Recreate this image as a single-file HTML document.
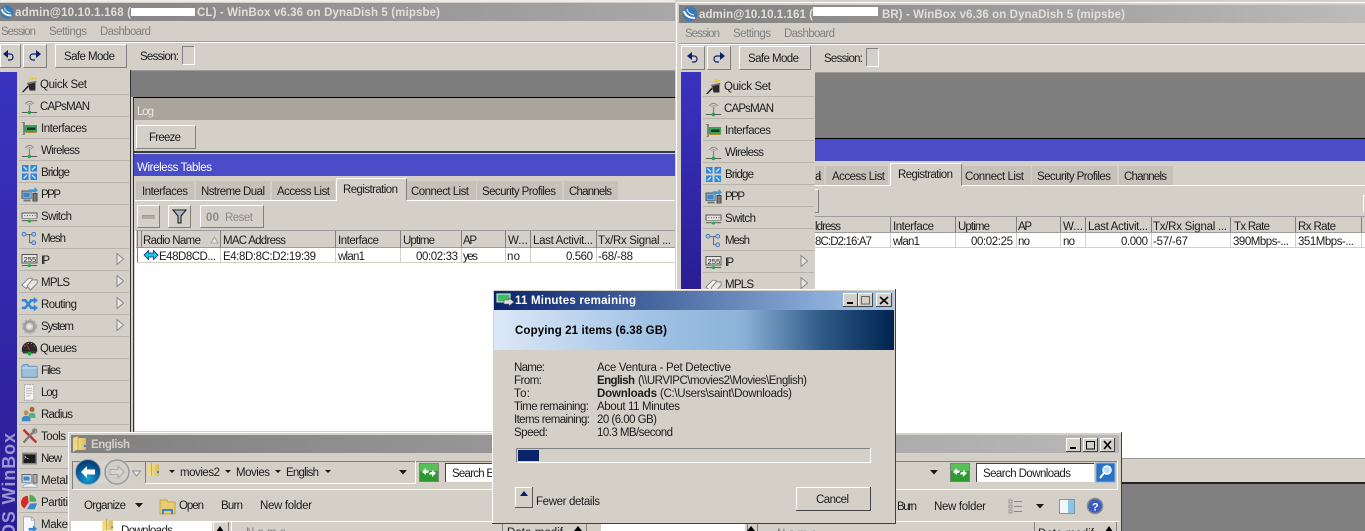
<!DOCTYPE html>
<html><head><meta charset="utf-8"><title>WinBox</title>
<style>
html,body{margin:0;padding:0;background:#fff;width:1365px;height:531px;overflow:hidden}
svg{display:block;font-family:"Liberation Sans",Arial,sans-serif;font-size:11.5px}
text{fill:#1c1c1c}
.g{fill:#808080}.t{fill:#e2dfd8;font-weight:bold}.k{fill:#fff}.c{fill:#d4d0c8;font-weight:bold}.dis{fill:#8a8a8a}
.w,.d,.l,.s,.x{fill:none;shape-rendering:crispEdges}
.w{stroke:#fff}.d{stroke:#808080}.l{stroke:#b8b4ac}.s{stroke:#9c9c9c}.x{stroke:#000}
rect{shape-rendering:crispEdges}
.tab{fill:#c6c2ba}
.ar{fill:#1a1a1a}
.uh{fill:#0b1f6a}.uc{fill:none;stroke:#0b1f6a;stroke-width:1.200}
</style></head><body>
<svg xmlns="http://www.w3.org/2000/svg" width="1365" height="531" viewBox="0 0 1365 531">
<defs>
<linearGradient id="tg1" x1="0" x2="1" y1="0" y2="0"><stop offset="0" stop-color="#808080"/><stop offset="1" stop-color="#a8a8a8"/></linearGradient>
<linearGradient id="tg2" x1="0" x2="1" y1="0" y2="0"><stop offset="0" stop-color="#808080"/><stop offset="1" stop-color="#bcbcbc"/></linearGradient>
<linearGradient id="tg3" x1="0" x2="1" y1="0" y2="0"><stop offset="0" stop-color="#808080"/><stop offset="1" stop-color="#b8b8b8"/></linearGradient>
<linearGradient id="sb" x1="0" x2="0" y1="0" y2="1"><stop offset="0" stop-color="#3a33c0"/><stop offset="1" stop-color="#2a1c94"/></linearGradient>
<linearGradient id="dt" x1="0" x2="1" y1="0" y2="0"><stop offset="0" stop-color="#0a246a"/><stop offset="1" stop-color="#a6caf0"/></linearGradient>
<linearGradient id="dg" x1="0" x2="1" y1="0" y2="0"><stop offset="0" stop-color="#dce8f6"/><stop offset=".42" stop-color="#9dc0e4"/><stop offset=".62" stop-color="#8cb2d8"/><stop offset=".82" stop-color="#2f5a86"/><stop offset="1" stop-color="#002350"/></linearGradient>
<radialGradient id="bk" cx=".5" cy=".75" r=".7"><stop offset="0" stop-color="#10a8d8"/><stop offset=".6" stop-color="#0a5c9c"/><stop offset="1" stop-color="#0a3a68"/></radialGradient>
<linearGradient id="fo" x1="0" x2="1" y1="0" y2="0"><stop offset="0" stop-color="#f6e6a0"/><stop offset="1" stop-color="#d8b850"/></linearGradient>

<symbol id="i-qs" viewBox="0 0 20 20"><path d="M1 19L8 11L9 13L3 19Z" fill="#222"/><path d="M8 8L17 7V17H10Z" fill="#2a2a2a"/><path d="M7 9L18 6.5" stroke="#777" stroke-width="2"/><path d="M9 4l1 1M13 1v4M15 3h3" stroke="#e0c020" stroke-width="1.4"/><circle cx="11" cy="3" r="1.2" fill="#f0e040"/></symbol>
<symbol id="i-wl" viewBox="0 0 20 20"><path d="M5 7Q10 1 15 7" fill="none" stroke="#888" stroke-width="1.1"/><path d="M7 8Q10 5 13 8" fill="none" stroke="#999" stroke-width="1"/><path d="M10 8V16" stroke="#888" stroke-width="1.5"/><path d="M1 17H19" stroke="#444" stroke-width="1"/><circle cx="10" cy="17" r="2" fill="#10b040"/></symbol>
<symbol id="i-if" viewBox="0 0 20 20"><path d="M1 3H4V17H2M3 3V16" fill="none" stroke="#777"/><rect x="4" y="6" width="15" height="8" fill="#3f9f5f"/><rect x="7" y="9" width="10" height="3" fill="#1a3a20"/><rect x="5" y="14" width="13" height="1.500" fill="#b09030"/></symbol>
<symbol id="i-br" viewBox="0 0 20 20"><g fill="#2f86d8"><rect x="1" y="1" width="8" height="8"/><rect x="11" y="1" width="8" height="8"/><rect x="1" y="11" width="8" height="8"/><rect x="11" y="11" width="8" height="8"/></g><path d="M3 3L7 7M17 3L13 7M3 17L7 13M17 17L13 13" stroke="#dcecfa" stroke-width="1.6"/></symbol>
<symbol id="i-pp" viewBox="0 0 20 20"><rect x="1" y="6" width="11" height="9" fill="#8aa8c8" stroke="#555"/><rect x="3" y="8" width="7" height="5" fill="#3a88cc"/><rect x="3" y="16" width="8" height="2" fill="#777"/><rect x="14" y="9" width="5" height="9" fill="#777" stroke="#444"/><path d="M9 4H16V1L20 5L16 9V7H9Z" fill="#3a9ae0"/></symbol>
<symbol id="i-sw" viewBox="0 0 20 20"><rect x="1" y="6" width="18" height="6" fill="#e4e2dc" stroke="#555"/><path d="M4 9h1M7 9h1M10 9h1M13 9h1M16 9h1" stroke="#222"/><path d="M1 15H19" stroke="#444"/><circle cx="10" cy="15.500" r="1.800" fill="#10b040"/></symbol>
<symbol id="i-me" viewBox="0 0 20 20"><circle cx="3.500" cy="5" r="2.300" fill="#a8c8f0" stroke="#3a6ac0"/><circle cx="15" cy="5" r="2.300" fill="#a8c8f0" stroke="#3a6ac0"/><circle cx="15" cy="15" r="2.300" fill="#a8c8f0" stroke="#3a6ac0"/><path d="M6 5.500H10V15H13M10 5.500H13" fill="none" stroke="#555"/></symbol>
<symbol id="i-ip" viewBox="0 0 20 20"><rect x="1" y="3" width="18" height="10" fill="#e8e6e0" stroke="#555"/><text x="3" y="12" style="font-size:9px">255</text><path d="M1 16H19" stroke="#444"/><circle cx="10" cy="16" r="1.800" fill="#10b040"/></symbol>
<symbol id="i-ml" viewBox="0 0 20 20"><path d="M1 13L9 5H13V9L6 17Z" fill="#f4f4f0" stroke="#777"/><path d="M7 14L13 7H19V11L11 19Z" fill="#e8e8e2" stroke="#777"/></symbol>
<symbol id="i-ro" viewBox="0 0 20 20"><path d="M1 5H5L12 14H16M1 14H5L12 5H16" fill="none" stroke="#2f86d8" stroke-width="3"/><path d="M15 1L20 5L15 9ZM15 10L20 14L15 18Z" fill="#2f86d8"/></symbol>
<symbol id="i-sy" viewBox="0 0 20 20"><circle cx="10" cy="10" r="6" fill="none" stroke="#a0a0a0" stroke-width="3.400"/><circle cx="10" cy="10" r="8.200" fill="none" stroke="#b0b0b0" stroke-width="2" stroke-dasharray="3 2.400"/><circle cx="10" cy="10" r="2.400" fill="#e8e8e8"/></symbol>
<symbol id="i-qu" viewBox="0 0 20 20"><path d="M1 11A9 9 0 0 1 19 11V14H1Z" fill="#2a2a2a"/><path d="M10 12L6 4" stroke="#e02020" stroke-width="1.200"/><path d="M4 7h1M8 4h1M12 4h1M15 7h1" stroke="#ddd"/><path d="M2 15H18" stroke="#333" stroke-width="1.600"/><circle cx="10" cy="16" r="2.200" fill="#10b040"/></symbol>
<symbol id="i-fi" viewBox="0 0 20 20"><path d="M1 5L3 3H8L9 5H18L19 6V18H1Z" fill="#9cc0dc" stroke="#5c86a8"/><path d="M1 7H19" stroke="#cfe2f0"/></symbol>
<symbol id="i-lo" viewBox="0 0 20 20"><path d="M4 1H15V19H4Z" fill="#f6f6f0" stroke="#999" stroke-dasharray="2 1"/><path d="M6 5h7M6 8h7M6 11h7M6 14h5" stroke="#a8a8a8"/></symbol>
<symbol id="i-ra" viewBox="0 0 20 20"><circle cx="13" cy="4" r="3" fill="#b06a30"/><path d="M9 14V10Q13 6 17 10V14Z" fill="#50b080"/><circle cx="6" cy="8" r="2.800" fill="#c08a50"/><path d="M1 18V14Q6 9 11 14V18Z" fill="#3a88cc"/></symbol>
<symbol id="i-to" viewBox="0 0 20 20"><path d="M3 2L18 17" stroke="#d03030" stroke-width="3"/><path d="M17 2L3 17" stroke="#777" stroke-width="2.600"/><circle cx="16" cy="3.500" r="2.600" fill="none" stroke="#888" stroke-width="1.500"/></symbol>
<symbol id="i-te" viewBox="0 0 20 20"><rect x="1" y="3" width="18" height="14" fill="#888"/><rect x="3" y="5" width="14" height="10" fill="#1c1c1c"/><path d="M4 7l2 1.500-2 1.500M7 10h2" stroke="#ddd" fill="none" stroke-width=".8"/></symbol>
<symbol id="i-me2" viewBox="0 0 20 20"><rect x="1" y="3" width="11" height="9" fill="#cfd8e0" stroke="#666"/><rect x="3" y="5" width="7" height="5" fill="#3a88cc"/><rect x="14" y="3" width="5" height="10" fill="#aaa" stroke="#666"/><path d="M2 18Q4 13 9 14Q13 12 16 15Q20 15 19 18Z" fill="#e8f0f8" stroke="#98a8c0"/></symbol>
<symbol id="i-pa" viewBox="0 0 20 20"><path d="M8 2A8 8 0 0 0 4 17L9 10Z" fill="#d82828"/><path d="M10 1A8 8 0 0 1 18 9H10Z" fill="#50a850"/><path d="M11 11H19L16 18H7Z" fill="#3a88cc"/></symbol>
<symbol id="i-ma" viewBox="0 0 20 20"><path d="M3 1H12L16 5V19H3Z" fill="#f6f8fa" stroke="#98a4b0"/><path d="M12 1V5H16" fill="none" stroke="#98a4b0"/><path d="M9 14H14V11L19 15L14 19V17H9Z" fill="#2f86d8"/></symbol>
<symbol id="folder" viewBox="0 0 14 16"><path d="M0 2L5 0V13L0 16Z" fill="#f0d880"/><path d="M5 2H13V14H3Z" fill="url(#fo)"/><path d="M5 0V14" stroke="#b89838" stroke-width=".8"/><rect x="11" y="9" width="2" height="2" fill="#3a88cc"/></symbol>
<symbol id="logo" viewBox="0 0 16 16"><circle cx="8" cy="8" r="7.500" fill="#3a7ab8"/><path d="M2 5Q4 12 13 12" fill="none" stroke="#fff" stroke-width="2"/><path d="M5 3Q6 8 12 9" fill="none" stroke="#cfe2f4" stroke-width="1.200"/></symbol>
<symbol id="refresh" viewBox="0 0 20 19"><rect x=".5" y=".5" width="19" height="18" fill="#2c9a2c" stroke="#808080"/><rect x="1" y="1" width="18" height="7" fill="#58c058"/><path d="M3 9L7 5V7.500H10L9 10H7V12ZM17 10L13 14V11.500H10L11 9H13V7Z" fill="#fff"/></symbol>
<symbol id="tri" viewBox="0 0 20 20"><path d="M7 4.500L13.500 10L7 15.500Z" fill="#e8e6e0" stroke="#8a8a8a"/></symbol>
</defs>

<!-- background -->
<rect width="1365" height="531" fill="#d4d0c8"/>
<rect width="1365" height="2" fill="#fff" opacity=".6"/>

<!-- LEFT WINDOW -->
<rect x="0" y="3" width="675" height="18" fill="url(#tg1)"/>
<use href="#logo" x="0" y="4" width="14" height="16"/>
<text class="t" x="15" y="16" textLength="116">admin@10.10.1.168 (</text>
<rect x="131" y="8" width="64" height="8" fill="#fff"/>
<text class="t" x="197" y="16" textLength="243">CL) - WinBox v6.36 on DynaDish 5 (mipsbe)</text>
<text class="g" x="1" y="35" textLength="35">Session</text>
<text class="g" x="49" y="35" textLength="38">Settings</text>
<text class="g" x="100" y="35" textLength="51">Dashboard</text>
<path class="s" d="M0 41.500H675"/><path class="w" d="M0 42.500H675"/>
<path class="w" d="M0.500 67V44.500H20.500"/><path class="d" d="M20.500 44.500V67.500H0"/>
<path class="uh" d="M3 54L8 50V58Z"/><path class="uc" d="M7 54H10C14 54 14 60 10 60H8"/>
<path class="w" d="M23.500 67V44.500H46.500"/><path class="d" d="M46.500 44.500V67.500H23.500"/>
<path class="uh" d="M41 54L36 50V58Z"/><path class="uc" d="M37 54H33C29 54 29 60 33 60H35"/>
<path class="w" d="M55.500 67V44.500H126.500"/><path class="d" d="M126.500 44.500V67.500H55.500"/>
<text x="64" y="60" textLength="51">Safe Mode</text>
<text x="140" y="60" textLength="39">Session:</text>
<path class="d" d="M194.500 46.500H182.500V64.500"/><path class="w" d="M182.500 64.500H194.500V46.500"/>

<rect x="131" y="70" width="544" height="27" fill="#7d7d7d"/>
<path class="s" d="M131 70.500H675"/>
<rect x="131" y="97" width="544" height="1" fill="#000"/>
<rect x="133" y="98" width="542" height="22" fill="#a9a59d"/>
<text x="137" y="115" textLength="17" style="fill:#ece9e2">Log</text>
<path class="w" d="M136.500 148V125.500H195.500"/><path class="d" d="M195.500 125.500V148.500H136.500"/>
<text x="149" y="141" textLength="32">Freeze</text>
<rect x="133" y="151" width="542" height="2" fill="#3a3a3a"/>
<rect x="133" y="154" width="542" height="22" fill="#4b4dc8"/>
<text class="k" x="137" y="171" textLength="75">Wireless Tables</text>

<rect x="136" y="181" width="58" height="19" class="tab"/>
<rect x="196" y="181" width="74" height="19" class="tab"/>
<rect x="272" y="181" width="63" height="19" class="tab"/>
<rect x="407" y="181" width="69" height="19" class="tab"/>
<rect x="477" y="181" width="85" height="19" class="tab"/>
<rect x="564" y="181" width="54" height="19" class="tab"/>
<path class="w" d="M135 200.500H336.500V178.500H406"/><path class="d" d="M406.500 179V200"/><path class="w" d="M407 200.500H675"/>
<text x="142" y="195" textLength="46">Interfaces</text>
<text x="201" y="195" textLength="64">Nstreme Dual</text>
<text x="277" y="195" textLength="53">Access List</text>
<text x="343" y="193" textLength="55">Registration</text>
<text x="411" y="195" textLength="58">Connect List</text>
<text x="482" y="195" textLength="74">Security Profiles</text>
<text x="569" y="195" textLength="43">Channels</text>

<path class="w" d="M137.500 227V205.500H159.500"/><path class="d" d="M159.500 205.500V227.500H137.500"/>
<rect x="142" y="215" width="12" height="3" fill="#b0aca4" stroke="#888" stroke-width=".5"/>
<path class="w" d="M168.500 227V205.500H190.500"/><path class="d" d="M190.500 205.500V227.500H168.500"/>
<path d="M173 210H186L181 216V223L178 223V216Z" fill="#a8b4c0" stroke="#222" stroke-width="1.100"/>
<path class="w" d="M200.500 227V205.500H263.500"/><path class="d" d="M263.500 205.500V227.500H200.500"/>
<text class="dis" x="206" y="221" textLength="13" style="font-weight:bold">00</text>
<text class="dis" x="225" y="221" textLength="28">Reset</text>

<!-- left table -->
<rect x="135" y="231" width="540" height="200" fill="#fff"/>
<rect x="136" y="231" width="539" height="17" fill="#d4d0c8"/>
<path class="s" d="M136 230.500H675M136 247.500H675"/>
<path class="d" d="M137.500 231V262M141.500 231V248M220.500 231V248M335.500 231V248M400.500 231V248M461.500 231V248M505.500 231V248M530.500 231V248M596.500 231V248"/>
<path class="l" style="stroke:#d4d0c8" d="M137 262.500H675M220.500 248V262M335.500 248V262M400.500 248V262M461.500 248V262M505.500 248V262M530.500 248V262M596.500 248V262"/>
<text x="143" y="244" textLength="58">Radio Name</text>
<path d="M211 243L214.500 237L218 243Z" fill="#e8e6e0" stroke="#999" stroke-width=".8"/>
<text x="223" y="244" textLength="63">MAC Address</text>
<text x="338" y="244" textLength="41">Interface</text>
<text x="403" y="244" textLength="32">Uptime</text>
<text x="463" y="244" textLength="14">AP</text>
<text x="508" y="244" textLength="20">W...</text>
<text x="533" y="244" textLength="60">Last Activit...</text>
<text x="598" y="244" textLength="73">Tx/Rx Signal ...</text>
<path d="M144 255L148.500 250.500V253H153.500V250.500L158 255L153.500 259.500V257H148.500V259.500Z" fill="#18c8e0" stroke="#0a2a70" stroke-width=".8"/>
<text x="159" y="260" textLength="57">E48D8CD...</text>
<text x="223" y="260" textLength="93">E4:8D:8C:D2:19:39</text>
<text x="338" y="260" textLength="27">wlan1</text>
<text x="416" y="260" textLength="42">00:02:33</text>
<text x="463" y="260" textLength="15">yes</text>
<text x="507" y="260" textLength="13">no</text>
<text x="566" y="260" textLength="27">0.560</text>
<text x="598" y="260" textLength="35">-68/-88</text>

<!-- left sidebar -->
<rect x="0" y="72" width="17" height="459" fill="url(#sb)"/>
<rect x="17" y="70" width="113" height="461" fill="#d4d0c8"/>
<rect x="130" y="70" width="1" height="461" fill="#333"/>
<rect x="131" y="97" width="2" height="335" fill="#d4d0c8"/>
<rect x="133" y="98" width="1" height="334" fill="#333"/>
<path class="l" d="M19 94.500H129M19 116.500H129M19 138.500H129M19 160.500H129M19 182.500H129M19 204.500H129M19 226.500H129M19 248.500H129M19 270.500H129M19 292.500H129M19 314.500H129M19 336.500H129M19 358.500H129M19 380.500H129M19 402.500H129M19 424.500H129M19 446.500H129M19 468.500H129M19 490.500H129M19 512.500H129"/>
<text transform="translate(15 538) rotate(-90)" x="0" y="0" textLength="105" style="fill:#9a97d2;font-size:18px;font-weight:bold">OS WinBox</text>
<use href="#i-qs" x="21" y="76" width="17" height="17"/><text x="40" y="88" textLength="47">Quick Set</text>
<use href="#i-wl" x="21" y="98" width="17" height="17"/><text x="40" y="110" textLength="50">CAPsMAN</text>
<use href="#i-if" x="21" y="120" width="17" height="17"/><text x="41" y="132" textLength="46">Interfaces</text>
<use href="#i-wl" x="21" y="142" width="17" height="17"/><text x="41" y="154" textLength="39">Wireless</text>
<use href="#i-br" x="21" y="164" width="17" height="17"/><text x="41" y="176" textLength="29">Bridge</text>
<use href="#i-pp" x="21" y="186" width="17" height="17"/><text x="41" y="198" textLength="20">PPP</text>
<use href="#i-sw" x="21" y="208" width="17" height="17"/><text x="41" y="220" textLength="31">Switch</text>
<use href="#i-me" x="21" y="230" width="17" height="17"/><text x="41" y="242" textLength="25">Mesh</text>
<use href="#i-ip" x="21" y="252" width="17" height="17"/><text x="41" y="264" textLength="9">IP</text><use href="#tri" x="110" y="249" width="20" height="20"/>
<use href="#i-ml" x="21" y="274" width="17" height="17"/><text x="41" y="286" textLength="29">MPLS</text><use href="#tri" x="110" y="271" width="20" height="20"/>
<use href="#i-ro" x="21" y="296" width="17" height="17"/><text x="41" y="308" textLength="36">Routing</text><use href="#tri" x="110" y="293" width="20" height="20"/>
<use href="#i-sy" x="21" y="318" width="17" height="17"/><text x="41" y="330" textLength="33">System</text><use href="#tri" x="110" y="315" width="20" height="20"/>
<use href="#i-qu" x="21" y="340" width="17" height="17"/><text x="40" y="352" textLength="37">Queues</text>
<use href="#i-fi" x="21" y="362" width="17" height="17"/><text x="41" y="374" textLength="20">Files</text>
<use href="#i-lo" x="21" y="384" width="17" height="17"/><text x="41" y="396" textLength="17">Log</text>
<use href="#i-ra" x="21" y="406" width="17" height="17"/><text x="41" y="418" textLength="32">Radius</text>
<use href="#i-to" x="21" y="428" width="17" height="17"/><text x="41" y="440" textLength="25">Tools</text>
<use href="#i-te" x="21" y="450" width="17" height="17"/><text x="41" y="462" textLength="21">New</text>
<use href="#i-me2" x="21" y="472" width="17" height="17"/><text x="41" y="484" textLength="27">Metal</text>
<use href="#i-pa" x="21" y="494" width="17" height="17"/><text x="41" y="506" textLength="27">Partiti</text>
<use href="#i-ma" x="21" y="516" width="17" height="17"/><text x="41" y="528" textLength="27">Make</text>

<!-- RIGHT WINDOW -->
<rect x="675" y="0" width="690" height="531" fill="#d4d0c8"/>
<path class="w" d="M676.500 3V531M677 2.500H1365"/>
<rect x="679" y="5" width="686" height="18" fill="url(#tg2)"/>
<use href="#logo" x="682" y="6" width="16" height="16"/>
<text class="t" x="699" y="18" textLength="114">admin@10.10.1.161 (</text>
<rect x="813" y="7" width="65" height="9" fill="#fff"/>
<text class="t" x="882" y="18" textLength="243">BR) - WinBox v6.36 on DynaDish 5 (mipsbe)</text>
<text class="g" x="685" y="37" textLength="35">Session</text>
<text class="g" x="733" y="37" textLength="38">Settings</text>
<text class="g" x="784" y="37" textLength="51">Dashboard</text>
<path class="s" d="M679 43.500H1365"/><path class="w" d="M679 44.500H1365"/>
<path class="w" d="M681.500 69V46.500H704.500"/><path class="d" d="M704.500 46.500V69.500H681.500"/>
<path class="uh" d="M687 56L692 52V60Z"/><path class="uc" d="M691 56H694C698 56 698 62 694 62H692"/>
<path class="w" d="M707.500 69V46.500H730.500"/><path class="d" d="M730.500 46.500V69.500H707.500"/>
<path class="uh" d="M725 56L720 52V60Z"/><path class="uc" d="M721 56H717C713 56 713 62 717 62H719"/>
<path class="w" d="M739.500 69V46.500H810.500"/><path class="d" d="M810.500 46.500V69.500H739.500"/>
<text x="748" y="62" textLength="51">Safe Mode</text>
<text x="824" y="62" textLength="39">Session:</text>
<path class="d" d="M878.500 48.500H866.500V66.500"/><path class="w" d="M866.500 66.500H878.500V48.500"/>

<rect x="815" y="72" width="550" height="66" fill="#7f7f7f"/>
<path class="s" d="M815 72.500H1365"/>
<rect x="815" y="138" width="550" height="1" fill="#000"/>
<rect x="815" y="139" width="550" height="22" fill="#4b4dc8"/>

<rect x="815" y="166" width="9" height="19" class="tab"/>
<rect x="826" y="166" width="62" height="19" class="tab"/>
<rect x="962" y="166" width="69" height="19" class="tab"/>
<rect x="1032" y="166" width="85" height="19" class="tab"/>
<rect x="1119" y="166" width="54" height="19" class="tab"/>
<path class="w" d="M815 185.500H890.500V163.500H961"/><path class="d" d="M961.500 164V185"/><path class="w" d="M962 185.500H1365"/>
<text x="815" y="180" textLength="6">al</text>
<text x="832" y="180" textLength="53">Access List</text>
<text x="898" y="178" textLength="55">Registration</text>
<text x="965" y="180" textLength="59">Connect List</text>
<text x="1037" y="180" textLength="74">Security Profiles</text>
<text x="1124" y="180" textLength="43">Channels</text>
<path class="w" d="M815 189.500H817.500"/><path class="d" d="M818.500 190V212.500H815"/>
<path class="w" d="M1363.500 212V195.500H1365"/>

<rect x="815" y="232" width="550" height="226" fill="#fff"/>
<path class="s" d="M815 216.500H1365M815 232.500H1365"/>
<path class="d" d="M890.500 217V232M955.500 217V232M1016.500 217V232M1060.500 217V232M1085.500 217V232M1151.500 217V232M1230.500 217V232M1295.500 217V232M1361.500 217V232"/>
<path class="l" style="stroke:#d4d0c8" d="M815 247.500H1365M890.500 233V247M955.500 233V247M1016.500 233V247M1060.500 233V247M1085.500 233V247M1151.500 233V247M1230.500 233V247M1295.500 233V247M1361.500 233V247"/>
<text x="815" y="230" textLength="26">ldress</text>
<text x="893" y="230" textLength="41">Interface</text>
<text x="958" y="230" textLength="32">Uptime</text>
<text x="1018" y="230" textLength="14">AP</text>
<text x="1063" y="230" textLength="20">W...</text>
<text x="1088" y="230" textLength="60">Last Activit...</text>
<text x="1153" y="230" textLength="74">Tx/Rx Signal ...</text>
<text x="1234" y="230" textLength="36">Tx Rate</text>
<text x="1298" y="230" textLength="38">Rx Rate</text>
<text x="815" y="245" textLength="57">8C:D2:16:A7</text>
<text x="893" y="245" textLength="27">wlan1</text>
<text x="971" y="245" textLength="42">00:02:25</text>
<text x="1018" y="245" textLength="12">no</text>
<text x="1063" y="245" textLength="12">no</text>
<text x="1121" y="245" textLength="27">0.000</text>
<text x="1153" y="245" textLength="35">-57/-67</text>
<text x="1233" y="245" textLength="56">390Mbps-...</text>
<text x="1298" y="245" textLength="56">351Mbps-...</text>

<path class="s" d="M1122 458.500H1365"/>
<rect x="1122" y="482" width="243" height="2" fill="#222"/>
<rect x="1122" y="484" width="243" height="47" fill="#808080"/>

<!-- right sidebar -->
<rect x="681" y="72" width="20" height="220" fill="url(#sb)"/>
<rect x="701" y="72" width="114" height="220" fill="#d4d0c8"/>
<path class="l" d="M703 96.500H814M703 118.500H814M703 140.500H814M703 162.500H814M703 184.500H814M703 206.500H814M703 228.500H814M703 250.500H814M703 272.500H814"/>
<use href="#i-qs" x="705" y="78" width="17" height="17"/><text x="724" y="90" textLength="47">Quick Set</text>
<use href="#i-wl" x="705" y="100" width="17" height="17"/><text x="724" y="112" textLength="50">CAPsMAN</text>
<use href="#i-if" x="705" y="122" width="17" height="17"/><text x="725" y="134" textLength="46">Interfaces</text>
<use href="#i-wl" x="705" y="144" width="17" height="17"/><text x="725" y="156" textLength="39">Wireless</text>
<use href="#i-br" x="705" y="166" width="17" height="17"/><text x="725" y="178" textLength="29">Bridge</text>
<use href="#i-pp" x="705" y="188" width="17" height="17"/><text x="725" y="200" textLength="20">PPP</text>
<use href="#i-sw" x="705" y="210" width="17" height="17"/><text x="725" y="222" textLength="31">Switch</text>
<use href="#i-me" x="705" y="232" width="17" height="17"/><text x="725" y="244" textLength="25">Mesh</text>
<use href="#i-ip" x="705" y="254" width="17" height="17"/><text x="725" y="266" textLength="9">IP</text><use href="#tri" x="794" y="251" width="20" height="20"/>
<use href="#i-ml" x="705" y="276" width="17" height="17"/><text x="725" y="288" textLength="29">MPLS</text><use href="#tri" x="794" y="273" width="20" height="20"/>

<!-- EXPLORER -->
<rect x="68" y="432" width="1054" height="99" fill="#d4d0c8"/>
<path class="w" d="M68.500 531V432.500H1121"/><path class="x" style="stroke:#404040" d="M1121.500 432V531"/>
<rect x="71" y="435" width="1048" height="18" fill="url(#tg3)"/>
<use href="#folder" x="73" y="436" width="14" height="16"/>
<text class="c" x="91" y="448" textLength="39">English</text>
<rect x="1066" y="438" width="15" height="14" fill="#d4d0c8"/><rect x="1083" y="438" width="15" height="14" fill="#d4d0c8"/><rect x="1100" y="438" width="15" height="14" fill="#d4d0c8"/>
<path class="w" d="M1066.500 451V438.500H1080.500M1083.500 451V438.500H1097.500M1100.500 451V438.500H1114.500"/>
<path class="x" style="stroke:#444" d="M1080.500 438V451.500H1066M1097.500 438V451.500H1083M1114.500 438V451.500H1100"/>
<rect x="1070" y="447" width="6" height="2" fill="#000"/>
<rect x="1086.500" y="441.500" width="8" height="7.500" fill="none" stroke="#000" stroke-width="1.400"/>
<path d="M1104 441L1111 449M1111 441L1104 449" stroke="#000" stroke-width="1.600"/>
<path class="d" d="M72.500 489V461.500H1117.500"/><path class="w" d="M72.500 489.500H1117.500V461"/>
<path d="M74 472Q80 456 100 461H122Q132 462 132 472Q132 483 122 483H100Q80 488 74 472Z" fill="#d8d5ce"/>
<circle cx="88" cy="472" r="12.500" fill="url(#bk)" stroke="#8aa8c0"/>
<path d="M81 472L87 466V469.500H95V474.500H87V478Z" fill="#fff"/>
<circle cx="117" cy="472" r="12" fill="#d0cec8" stroke="#9a9a9a" stroke-width="1.500"/>
<path d="M124 472L118 466V469.500H110V474.500H118V478Z" fill="#d8d6d0" stroke="#a8a8a8"/>
<path d="M132.500 471H140.500L136.500 476Z" fill="#f0eee8" stroke="#8a8a8a"/>
<path class="d" d="M145.500 483V461.500H415.500"/><path class="w" d="M145.500 483.500H415.500V461"/>
<use href="#folder" x="147" y="461" width="13" height="18"/>
<path class="ar" d="M169 470H175L172 473ZM225 470H231L228 473ZM275 470H281L278 473ZM325 470H331L328 473ZM399 470H407L403 474.500Z"/>
<text x="180" y="476" textLength="40">movies2</text>
<text x="236" y="476" textLength="34">Movies</text>
<text x="286" y="476" textLength="33">English</text>
<use href="#refresh" x="419" y="463" width="20" height="19"/>
<rect x="445" y="463" width="50" height="19" fill="#fff"/>
<path class="x" style="stroke:#444" d="M445.500 482V463.500H495"/>
<text x="452" y="477" textLength="42">Search E</text>
<path class="ar" d="M930 470H938L934 474.500Z"/>
<use href="#refresh" x="950" y="463" width="20" height="19"/>
<rect x="976" y="463" width="118" height="19" fill="#fff"/>
<path class="x" style="stroke:#444" d="M976.500 482V463.500H1094"/>
<text x="983" y="477" textLength="88">Search Downloads</text>
<rect x="1096" y="463" width="19" height="19" fill="#2a72c8" stroke="#8ab0d8"/>
<circle cx="1107" cy="470" r="4" fill="#bcdcf8" stroke="#fff" stroke-width="1.500"/>
<path d="M1104 473L1100 478" stroke="#fff" stroke-width="2"/>

<text x="84" y="509" textLength="42">Organize</text>
<path class="ar" d="M135 503H143L139 507.500Z"/>
<path d="M160 500H167L168 502H175V514H160Z" fill="#e8cc70" stroke="#b89838" stroke-width=".7"/><path d="M162 509H173V514H171V511H164V514H162Z" fill="#3a88cc"/>
<text x="179" y="509" textLength="25">Open</text>
<text x="221" y="509" textLength="22">Burn</text>
<text x="260" y="509" textLength="52">New folder</text>
<text x="897" y="510" textLength="20">Burn</text>
<text x="934" y="510" textLength="52">New folder</text>
<path d="M1009 500h3v3h-3zM1009 505h3v3h-3zM1009 510h3v3h-3z" fill="none" stroke="#888" stroke-width=".8"/>
<path d="M1014 501.500h8M1014 506.500h8M1014 511.500h8" stroke="#888"/>
<path class="ar" d="M1036 504H1044L1040 508.500Z"/>
<rect x="1059.500" y="499.500" width="15" height="14" fill="#f0f6fa" stroke="#7a98b0"/><rect x="1068" y="500" width="6" height="13" fill="#8cc4e4"/>
<circle cx="1095" cy="506" r="7.500" fill="#3a5cc0" stroke="#8a8a8a" stroke-width="1.500"/>
<text x="1092" y="510.500" style="fill:#fff;font-size:11px;font-weight:bold">?</text>

<path class="w" d="M71 521.500H1119"/>
<rect x="71" y="522" width="141" height="9" fill="#fff"/>
<use href="#folder" x="101" y="519" width="14" height="13"/>
<text x="121" y="534" textLength="52">Downloads</text>
<path class="w" d="M213.500 531V522H227"/>
<path d="M216 532L220 526L224 532Z" fill="#000"/>
<path class="d" d="M228.500 522V531"/>
<path class="w" d="M231.500 531V522"/>
<text class="g" x="246" y="536" textLength="40">Name</text>
<path class="d" d="M1034.500 522V531"/>
<text x="1038" y="537" textLength="56">Date modif</text>
<path d="M1105 532L1109 526L1113 532Z" fill="#000"/>
<path class="d" d="M1116.500 522V531"/>
<rect x="601" y="524" width="144" height="7" fill="#fff"/>
<path class="d" d="M502.500 524V531M586.500 524V531M747.500 524V531M757.500 524V531"/>
<text x="507" y="536" textLength="56">Date modif</text>
<path d="M574 531L578 526L582 531Z" fill="#000"/><path d="M747 531L751 526L755 531Z" fill="#000"/>
<text class="g" x="777" y="537" textLength="40">Name</text>

<!-- DIALOG -->
<rect x="492" y="289" width="404" height="235" fill="#d4d0c8"/>
<path class="w" d="M492.500 523V289.500H895"/><path class="x" style="stroke:#404040" d="M895.500 289V523.500H492"/>
<rect x="494" y="291" width="400" height="19" fill="url(#dt)"/>
<rect x="497" y="294" width="13" height="8" fill="#3cc060" stroke="#e8e8e8"/><path d="M504 300H509V298L514 302L509 306V304H504Z" fill="#e0e0e0" stroke="#555" stroke-width=".6"/>
<text class="k" x="515" y="304" textLength="121" style="font-weight:bold">11 Minutes remaining</text>
<rect x="843" y="293" width="14" height="14" fill="#d4d0c8"/><rect x="858" y="293" width="15" height="14" fill="#d4d0c8"/><rect x="876" y="293" width="16" height="14" fill="#d4d0c8"/>
<path class="w" d="M843.500 306V293.500H857.500M858.500 306V293.500H872.500M876.500 306V293.500H891.500"/>
<path class="x" style="stroke:#444" d="M857.500 293V306.500H843M872.500 293V306.500H858M891.500 293V306.500H876"/>
<rect x="847" y="302" width="6" height="2" fill="#000"/>
<rect x="861.500" y="296.500" width="8" height="7.500" fill="none" stroke="#666" stroke-width="1.300"/>
<path d="M880 297L888 304M888 297L880 304" stroke="#000" stroke-width="1.600"/>
<rect x="494" y="310" width="400" height="40" fill="url(#dg)"/>
<text x="515" y="334" textLength="152" style="font-weight:bold;fill:#000">Copying 21 items (6.38 GB)</text>

<text x="514" y="371" textLength="31">Name:</text>
<text x="514" y="384" textLength="28">From:</text>
<text x="514" y="397" textLength="16">To:</text>
<text x="514" y="410" textLength="75">Time remaining:</text>
<text x="514" y="423" textLength="76">Items remaining:</text>
<text x="514" y="436" textLength="34">Speed:</text>
<text x="597" y="371" textLength="134">Ace Ventura - Pet Detective</text>
<text x="597" y="384" textLength="38" style="font-weight:bold">English</text>
<text x="638" y="384" textLength="169">(\\URVIPC\movies2\Movies\English)</text>
<text x="597" y="397" textLength="60" style="font-weight:bold">Downloads</text>
<text x="660" y="397" textLength="132">(C:\Users\saint\Downloads)</text>
<text x="597" y="410" textLength="83">About 11 Minutes</text>
<text x="597" y="423" textLength="60">20 (6.00 GB)</text>
<text x="597" y="436" textLength="76">10.3 MB/second</text>

<path class="d" d="M516.500 463V448.500H871"/><path class="w" d="M516.500 462.500H870.500V448"/>
<rect x="518" y="450" width="21" height="11" fill="#0a246a"/>

<path class="w" d="M515.500 508V487.500H533"/><path class="x" style="stroke:#555" d="M532.500 487V507.500H515"/>
<path d="M520 496L524 491L528 496Z" fill="#0a1a70"/>
<text x="536" y="505" textLength="64">Fewer details</text>
<path class="w" d="M796.500 511V487.500H871"/><path class="x" style="stroke:#444" d="M870.500 487V510.500H796"/>
<text x="816" y="503" textLength="33">Cancel</text>
</svg>
</body></html>
